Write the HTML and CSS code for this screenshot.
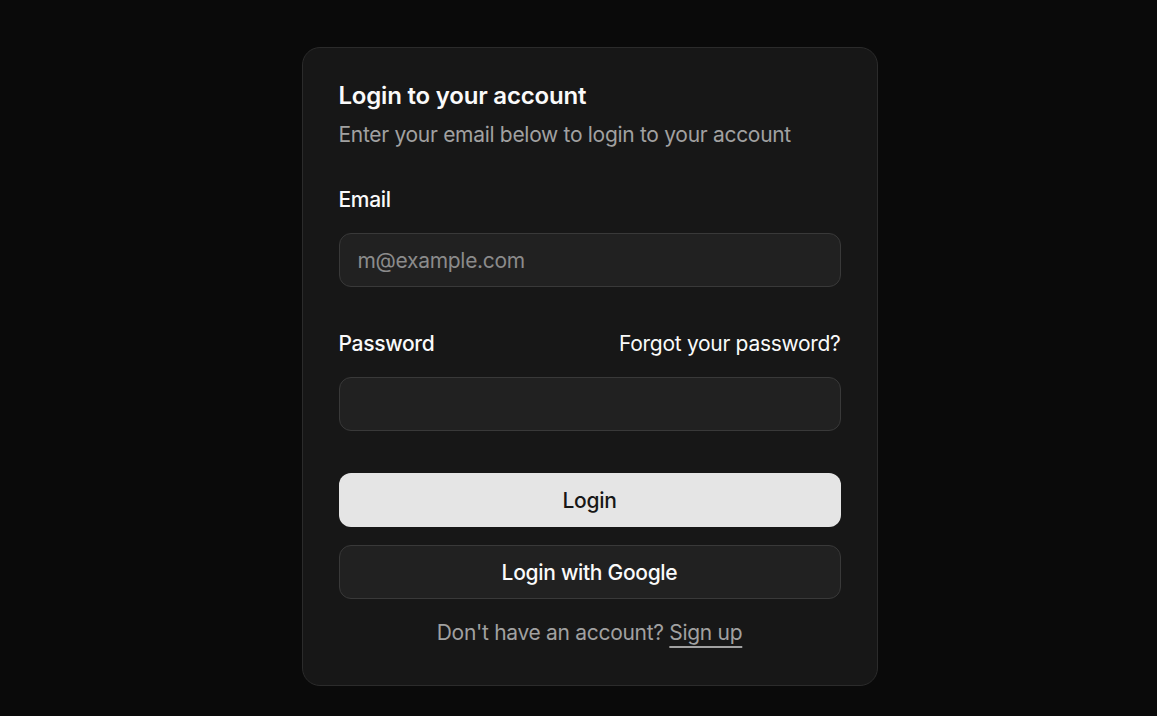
FILE: index.html
```html
<!DOCTYPE html>
<html lang="en">
  <head>
    <meta charset="UTF-8" />
    <meta name="viewport" content="width=device-width, initial-scale=1.0" />
    <title>Login</title>
    <link rel="stylesheet" href="styles.css">
  </head>
  <body>
    <div class="pagina">
      <div class="cartao">
        <div class="cabecalho">
          <h1 class="titulo">Login to your account</h1>
          <p class="descricao">Enter your email below to login to your account</p>
        </div>
        <form class="formulario" onsubmit="return false">
          <div class="campo">
            <label class="rotulo" for="email">Email</label>
            <input class="entrada" type="email" id="email" placeholder="m@example.com" />
          </div>
          <div class="campo campo-senha">
            <div class="linha-senha">
              <label class="rotulo" for="password">Password</label>
              <a class="esqueci" href="#">Forgot your password?</a>
            </div>
            <input class="entrada" type="password" id="password" />
          </div>
          <button class="botao botao-primario" type="submit">Login</button>
          <button class="botao botao-google" type="button">Login with Google</button>
          <p class="rodape">Don't have an account? <a href="#" class="cadastro">Sign up</a></p>
        </form>
      </div>
    </div>
  </body>
</html>
```

FILE: styles.css
```css
* {
  margin: 0;
  padding: 0;
  box-sizing: border-box;
}
body {
  background-color: #0a0a0a;
  font-family: Inter, "Noto Sans", sans-serif;
  color: #fafafa;
  letter-spacing: -0.3px;
}
.pagina {
  display: flex;
  justify-content: center;
  padding: 47px 0 0 22px;
  min-height: 100vh;
}
.cartao {
  width: 576px;
  height: 639px;
  background-color: #171717;
  border: 1px solid #2b2b2b;
  border-radius: 18px;
  padding: 36px;
}
.titulo {
  font-size: 24px;
  line-height: 1;
  font-weight: 600;
  letter-spacing: -0.2px;
}
.descricao {
  margin-top: 12px;
  font-size: 21px;
  line-height: 30px;
  color: #a1a1a1;
}
.formulario {
  display: flex;
  flex-direction: column;
  margin-top: 39px;
}
.campo {
  display: flex;
  flex-direction: column;
  gap: 23px;
}
.campo-senha {
  margin-top: 46px;
}
.linha-senha {
  display: flex;
  justify-content: space-between;
  align-items: center;
}
.rotulo {
  font-size: 21px;
  line-height: 1;
  font-weight: 500;
}
.esqueci {
  font-size: 21px;
  line-height: 1;
  color: #fafafa;
  text-decoration: none;
}
.entrada {
  height: 54px;
  width: 100%;
  background-color: #212121;
  border: 1px solid #393939;
  border-radius: 12px;
  padding: 0 18px;
  font-family: inherit;
  font-size: 21px;
  letter-spacing: -0.3px;
  color: #fafafa;
  outline: none;
}
.entrada::placeholder {
  color: #8b8b8b;
}
.botao {
  height: 54px;
  width: 100%;
  border-radius: 12px;
  font-family: inherit;
  font-size: 21px;
  font-weight: 500;
  letter-spacing: -0.3px;
  cursor: pointer;
}
.botao-primario {
  margin-top: 42px;
  background-color: #e5e5e5;
  color: #171717;
  border: none;
}
.botao-google {
  margin-top: 18px;
  background-color: #212121;
  color: #fafafa;
  border: 1px solid #393939;
}
.rodape {
  margin-top: 19px;
  text-align: center;
  font-size: 21px;
  line-height: 30px;
  color: #a1a1a1;
}
.cadastro {
  color: #a1a1a1;
  text-decoration: underline;
  text-underline-offset: 6px;
  text-decoration-thickness: 2px;
}
```
